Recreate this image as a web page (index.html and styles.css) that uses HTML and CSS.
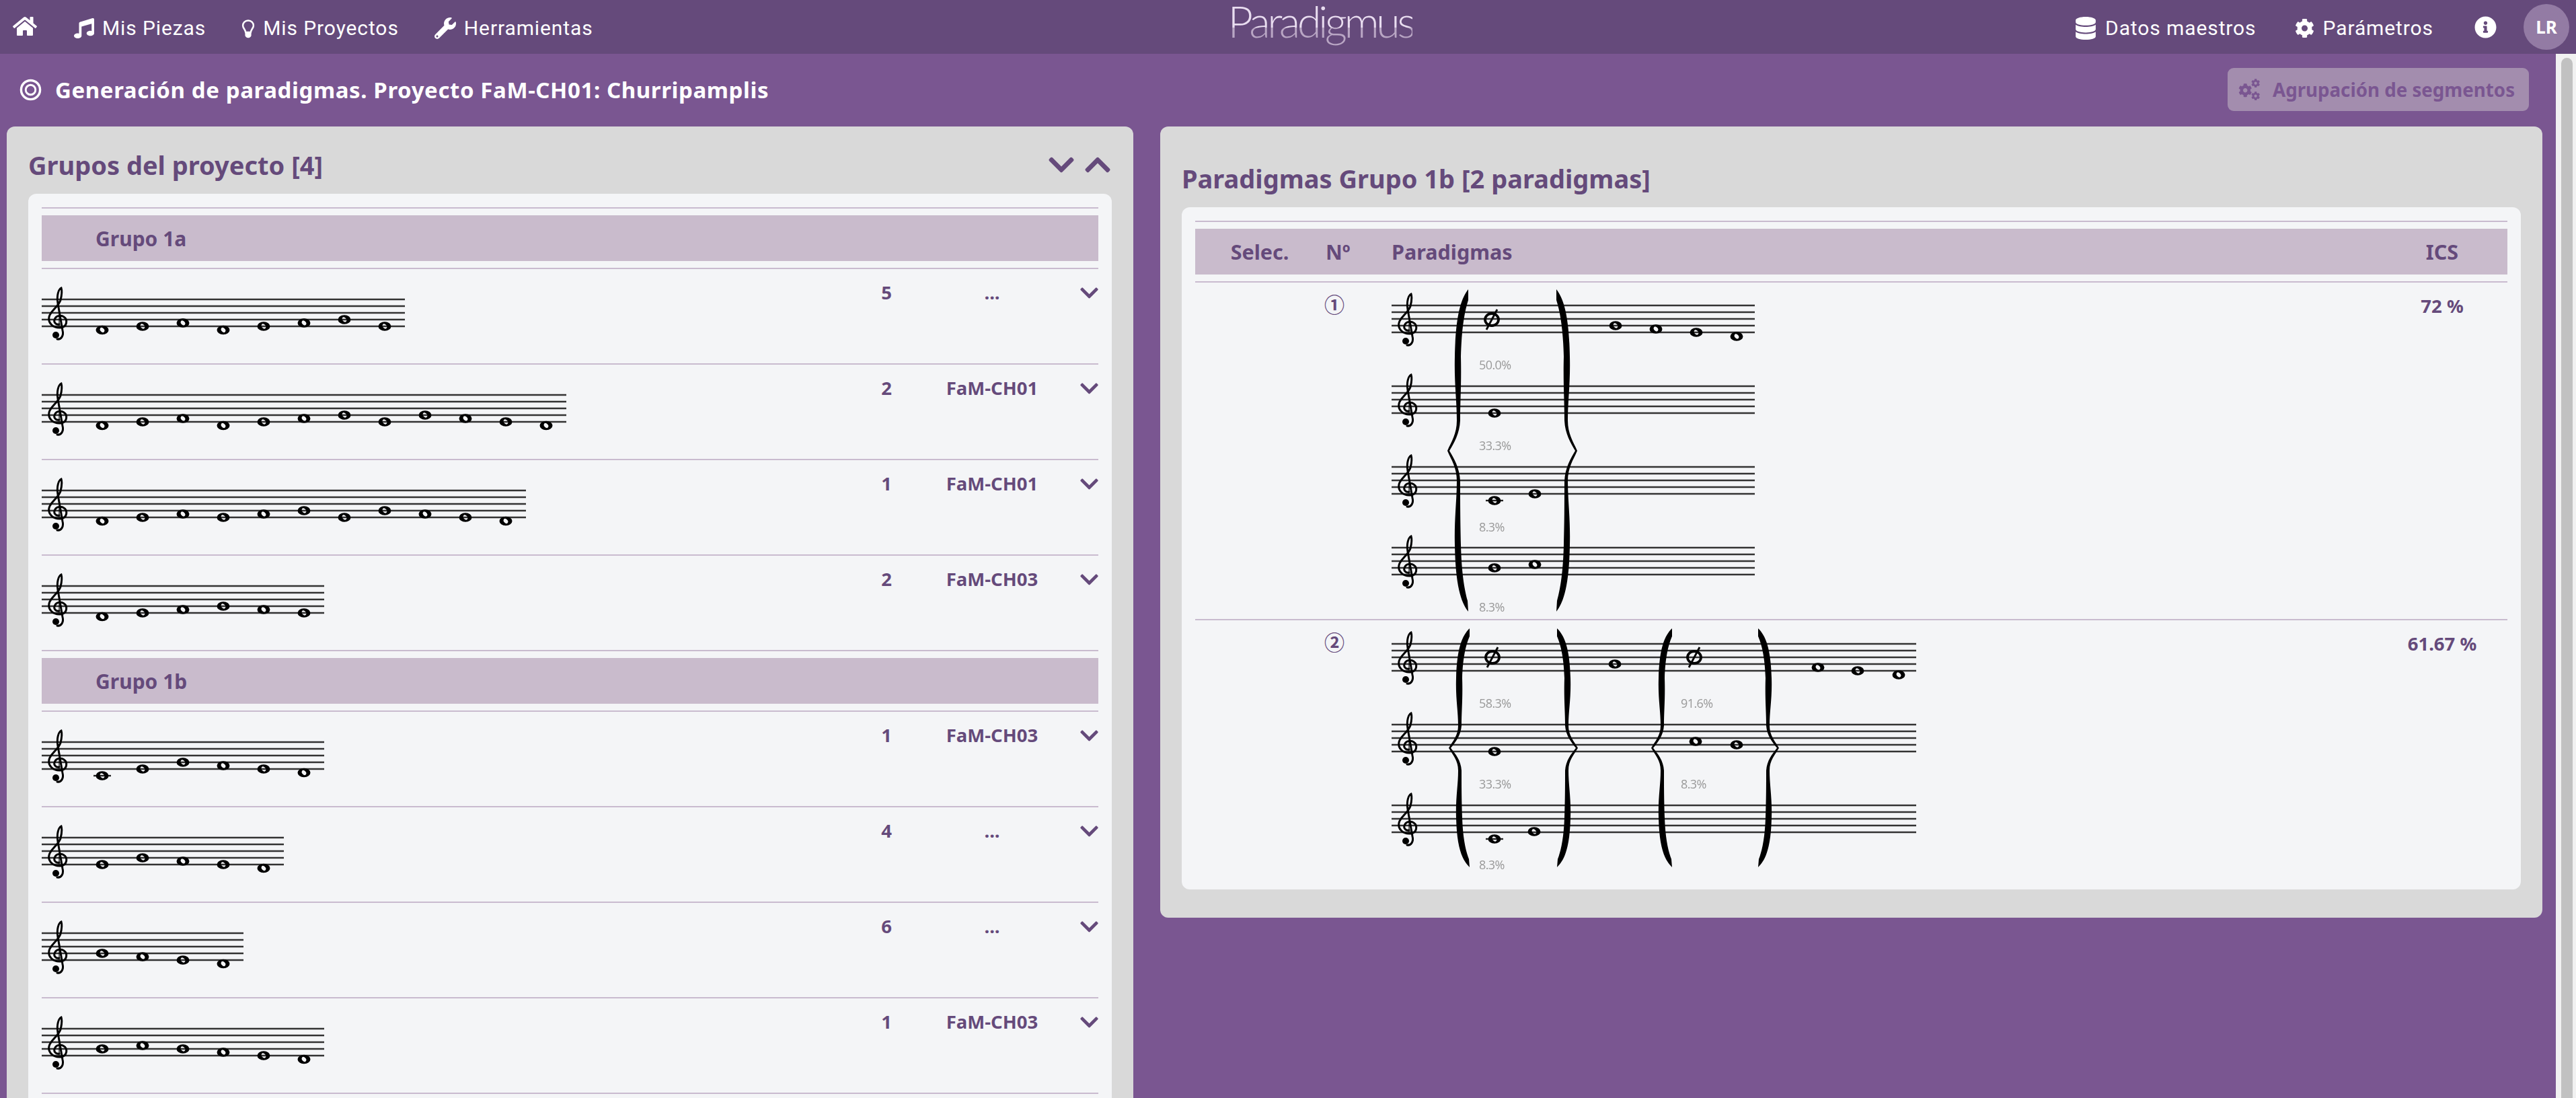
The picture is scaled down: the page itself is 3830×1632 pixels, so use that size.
FILE: index.html
```html
<!DOCTYPE html>
<html lang="es">
<head>
<meta charset="utf-8">
<title>Paradigmus</title>
<link rel="stylesheet" href="styles.css">
</head>
<body>
<svg class="defs" aria-hidden="true">
  <defs>
    <path id="i-home" d="M280.37 148.26L96 300.11V464a16 16 0 0 0 16 16l112.06-.29a16 16 0 0 0 15.92-16V368a16 16 0 0 1 16-16h64a16 16 0 0 1 16 16v95.64a16 16 0 0 0 16 16.05L464 480a16 16 0 0 0 16-16V300L295.67 148.26a12.19 12.19 0 0 0-15.3 0zM571.6 251.47L488 182.56V44.05a12 12 0 0 0-12-12h-56a12 12 0 0 0-12 12v72.61L318.47 43a48 48 0 0 0-61 0L4.34 251.47a12 12 0 0 0-1.6 16.9l25.5 31A12 12 0 0 0 45.15 301l235.22-193.74a12.19 12.19 0 0 1 15.3 0L530.9 301a12 12 0 0 0 16.9-1.6l25.5-31a12 12 0 0 0-1.7-16.93z"/>
    <path id="i-music" d="M470.38 1.51L150.41 96A32 32 0 0 0 128 126.51v261.41A139 139 0 0 0 96 384c-53 0-96 28.66-96 64s43 64 96 64 96-28.66 96-64V214.32l256-75v184.61a138.4 138.4 0 0 0-32-3.93c-53 0-96 28.66-96 64s43 64 96 64 96-28.65 96-64V32a32 32 0 0 0-41.62-30.49z"/>
    <path id="i-wrench" d="M507.73 109.1c-2.24-9.03-13.54-12.09-20.12-5.51l-74.36 74.36-67.88-11.31-11.31-67.88 74.36-74.36c6.62-6.62 3.43-17.9-5.66-20.16-47.38-11.74-99.55.91-136.58 37.93-39.64 39.64-50.55 97.1-34.05 147.2L18.74 402.76c-24.99 24.99-24.99 65.51 0 90.5 24.99 24.99 65.51 24.99 90.5 0l213.21-213.21c50.12 16.71 107.47 5.68 147.37-34.22 37.07-37.07 49.7-89.32 37.91-136.73zM64 472c-13.25 0-24-10.75-24-24 0-13.26 10.75-24 24-24s24 10.74 24 24c0 13.25-10.75 24-24 24z"/>
    <path id="i-db" d="M448 73.143v45.714C448 159.143 347.667 192 224 192S0 159.143 0 118.857V73.143C0 32.857 100.333 0 224 0s224 32.857 224 73.143zM448 176v102.857C448 319.143 347.667 352 224 352S0 319.143 0 278.857V176c48.125 33.143 136.208 48.572 224 48.572S399.874 209.143 448 176zm0 160v102.857C448 479.143 347.667 512 224 512S0 479.143 0 438.857V336c48.125 33.143 136.208 48.572 224 48.572S399.874 369.143 448 336z"/>
    <path id="i-cog" d="M487.4 315.7l-42.6-24.6c4.3-23.2 4.3-47 0-70.2l42.6-24.6c4.9-2.8 7.1-8.6 5.5-14-11.1-35.6-30-67.8-54.7-94.6-3.8-4.1-10-5.1-14.8-2.3L380.8 110c-17.9-15.4-38.5-27.3-60.8-35.1V25.8c0-5.6-3.9-10.5-9.4-11.7-36.7-8.2-74.3-7.8-109.2 0-5.5 1.2-9.4 6.1-9.4 11.7V75c-22.2 7.9-42.8 19.8-60.8 35.1L88.7 85.5c-4.9-2.8-11-1.9-14.8 2.3-24.7 26.7-43.6 58.9-54.7 94.6-1.7 5.4.6 11.2 5.5 14L67.3 221c-4.3 23.2-4.3 47 0 70.2l-42.6 24.6c-4.9 2.8-7.1 8.6-5.5 14 11.1 35.6 30 67.8 54.7 94.6 3.8 4.1 10 5.1 14.8 2.3l42.6-24.6c17.9 15.4 38.5 27.3 60.8 35.1v49.2c0 5.6 3.9 10.5 9.4 11.7 36.7 8.2 74.3 7.8 109.2 0 5.5-1.2 9.4-6.1 9.4-11.7v-49.2c22.2-7.9 42.8-19.8 60.8-35.1l42.6 24.6c4.9 2.8 11 1.9 14.8-2.3 24.7-26.7 43.6-58.9 54.7-94.6 1.5-5.5-.7-11.3-5.6-14.1zM256 336c-44.1 0-80-35.9-80-80s35.9-80 80-80 80 35.9 80 80-35.9 80-80 80z"/>
    <path id="i-info" d="M256 8C119 8 8 119.1 8 256c0 137 111 248 248 248s248-111 248-248C504 119.1 393 8 256 8zm0 110c23.2 0 42 18.8 42 42s-18.8 42-42 42-42-18.8-42-42 18.8-42 42-42zm56 254c0 6.6-5.4 12-12 12h-88c-6.6 0-12-5.4-12-12v-24c0-6.6 5.4-12 12-12h12v-64h-12c-6.6 0-12-5.4-12-12v-24c0-6.6 5.4-12 12-12h64c6.6 0 12 5.4 12 12v100h12c6.6 0 12 5.4 12 12v24z"/>
    <path id="i-chev" d="M207.029 381.476L12.686 187.132c-9.373-9.373-9.373-24.569 0-33.941l22.667-22.667c9.357-9.357 24.522-9.375 33.901-.04L224 284.505l154.745-154.021c9.379-9.335 24.544-9.317 33.901.04l22.667 22.667c9.373 9.373 9.373 24.569 0 33.941L240.971 381.476c-9.373 9.372-24.569 9.372-33.942 0z"/>

    <g id="clef">
      <path fill="none" stroke="#000" stroke-width="3" stroke-linecap="round" d="M26 37C20 38 17 33 20 28C22 24 29 23 33 26C39 30 38 41 28 42C17 43 9 35 11 26C13 17 25 11 28 1C30-7 30-14 29-17C25-15 22-6 24 6L31 46C33 54 29 60 23 59"/>
      <path fill="none" stroke="#000" stroke-width="1.2" d="M26 22V40"/>
      <circle cx="21" cy="53" r="5" fill="#000"/>
    </g>
    <path id="n" fill="#000" fill-rule="evenodd" d="M-9.500 0A9.500 6.800 0 1 1 9.500 0A9.500 6.800 0 1 1-9.500 0ZM-3-2.600A4 2.700 50 1 0 3 2.600A4 2.700 50 1 0-3-2.600Z"/>
    <g id="nl"><path d="M-13 0H13" stroke="#222" stroke-width="2.4"/><use href="#n"/></g>
    <g id="ns" fill="none" stroke="#000">
      <ellipse rx="10" ry="9" stroke-width="3.800"/>
      <path d="M-8 15L8-15" stroke-width="2.800"/>
    </g>
    <path id="brace" fill="#000" d="M31 0C20 14 12 40 11 100C10 140 14 165 14 195C14 215 6 226 0 240C6 254 14 265 14 285C14 315 10 340 11 380C12 440 20 465 31 479L30 463C25 445 21 420 20 380C19 340 19 315 19 285C18 265 10 252 3 240C10 228 18 215 19 195C19 165 21 140 20 100C21 60 25 35 31 16Z"/>
  </defs>
</svg>

<header class="navbar">
  <nav class="nav-group">
    <a class="nav-home"><svg class="ico ico-home" viewBox="0 0 576 512"><use href="#i-home"/></svg></a>
    <a class="nav-link"><svg class="ico ico-music" viewBox="0 0 512 512"><use href="#i-music"/></svg>Mis Piezas</a>
    <a class="nav-link"><svg class="ico ico-bulb" viewBox="0 0 24 34"><path fill="none" stroke="currentColor" stroke-width="3" d="M12 2.500C6 2.500 2.500 7 2.500 11.500C2.500 16 6.500 18 7.500 23.500H16.500C17.500 18 21.500 16 21.500 11.500C21.500 7 18 2.500 12 2.500Z"/><path fill="currentColor" d="M6.500 23H17.500V29C17.500 31 15 33.500 12 33.500C9 33.500 6.500 31 6.500 29Z"/></svg>Mis Proyectos</a>
    <a class="nav-link"><svg class="ico ico-wrench" viewBox="0 0 512 512"><use href="#i-wrench"/></svg>Herramientas</a>
  </nav>
  <div class="logo">Paradigmus</div>
  <nav class="nav-group nav-right">
    <a class="nav-link nav-db"><svg class="ico ico-db" viewBox="0 0 448 512"><use href="#i-db"/></svg>Datos maestros</a>
    <a class="nav-link nav-par"><svg class="ico ico-cog" viewBox="0 0 512 512"><use href="#i-cog"/></svg>Parámetros</a>
    <a class="nav-info"><svg class="ico ico-info" viewBox="0 0 512 512"><use href="#i-info"/></svg></a>
    <span class="avatar">LR</span>
  </nav>
</header>

<section class="subheader">
  <h1 class="page-title">
    <svg class="ico ico-target" viewBox="0 0 34 34"><circle cx="17" cy="17" r="14.500" fill="none" stroke="currentColor" stroke-width="3.500"/><circle cx="17" cy="17" r="7.500" fill="none" stroke="currentColor" stroke-width="3"/></svg>
    Generación de paradigmas. Proyecto FaM-CH01: Churripamplis
  </h1>
  <button class="btn-disabled" type="button">
    <svg class="ico ico-gears" viewBox="0 0 32 32"><use href="#i-cog" transform="translate(0 7) scale(.04)"/><use href="#i-cog" transform="translate(19 0) scale(.026)"/><use href="#i-cog" transform="translate(19 19) scale(.026)"/></svg>
    Agrupación de segmentos
  </button>
</section>

<main class="columns">
  <section class="card">
    <div class="card-head card-head-left">
      <h2 class="card-title">Grupos del proyecto [4]</h2>
      <div class="card-tools">
        <svg class="ico ico-tool" viewBox="0 0 448 512"><use href="#i-chev"/></svg>
        <svg class="ico ico-tool flip" viewBox="0 0 448 512"><use href="#i-chev"/></svg>
      </div>
    </div>
    <div class="panel">
      <div class="group-row"><div class="group-bar">Grupo 1a</div></div>

      <div class="item">
        <svg class="score" width="540" height="100" viewBox="0 -25 540 100"><path class="staff" d="M0 0H540M0 10H540M0 20H540M0 30H540M0 40H540"/><use href="#clef"/><use href="#n" x="90" y="45.500"/><use href="#n" x="150" y="40"/><use href="#n" x="210" y="35"/><use href="#n" x="270" y="45.500"/><use href="#n" x="330" y="40"/><use href="#n" x="390" y="35"/><use href="#n" x="450" y="30"/><use href="#n" x="510" y="40"/></svg>
        <span class="cell">5</span><span class="cell">...</span>
        <span class="cell-chev"><svg class="ico ico-chev" viewBox="0 0 448 512"><use href="#i-chev"/></svg></span>
      </div>
      <div class="item">
        <svg class="score" width="780" height="100" viewBox="0 -25 780 100"><path class="staff" d="M0 0H780M0 10H780M0 20H780M0 30H780M0 40H780"/><use href="#clef"/><use href="#n" x="90" y="45.500"/><use href="#n" x="150" y="40"/><use href="#n" x="210" y="35"/><use href="#n" x="270" y="45.500"/><use href="#n" x="330" y="40"/><use href="#n" x="390" y="35"/><use href="#n" x="450" y="30"/><use href="#n" x="510" y="40"/><use href="#n" x="570" y="30"/><use href="#n" x="630" y="35"/><use href="#n" x="690" y="40"/><use href="#n" x="750" y="45.500"/></svg>
        <span class="cell">2</span><span class="cell">FaM-CH01</span>
        <span class="cell-chev"><svg class="ico ico-chev" viewBox="0 0 448 512"><use href="#i-chev"/></svg></span>
      </div>
      <div class="item">
        <svg class="score" width="720" height="100" viewBox="0 -25 720 100"><path class="staff" d="M0 0H720M0 10H720M0 20H720M0 30H720M0 40H720"/><use href="#clef"/><use href="#n" x="90" y="45.500"/><use href="#n" x="150" y="40"/><use href="#n" x="210" y="35"/><use href="#n" x="270" y="40"/><use href="#n" x="330" y="35"/><use href="#n" x="390" y="30"/><use href="#n" x="450" y="40"/><use href="#n" x="510" y="30"/><use href="#n" x="570" y="35"/><use href="#n" x="630" y="40"/><use href="#n" x="690" y="45.500"/></svg>
        <span class="cell">1</span><span class="cell">FaM-CH01</span>
        <span class="cell-chev"><svg class="ico ico-chev" viewBox="0 0 448 512"><use href="#i-chev"/></svg></span>
      </div>
      <div class="item">
        <svg class="score" width="420" height="100" viewBox="0 -25 420 100"><path class="staff" d="M0 0H420M0 10H420M0 20H420M0 30H420M0 40H420"/><use href="#clef"/><use href="#n" x="90" y="45.500"/><use href="#n" x="150" y="40"/><use href="#n" x="210" y="35"/><use href="#n" x="270" y="30"/><use href="#n" x="330" y="35"/><use href="#n" x="390" y="40"/></svg>
        <span class="cell">2</span><span class="cell">FaM-CH03</span>
        <span class="cell-chev"><svg class="ico ico-chev" viewBox="0 0 448 512"><use href="#i-chev"/></svg></span>
      </div>

      <div class="group-row"><div class="group-bar">Grupo 1b</div></div>

      <div class="item">
        <svg class="score" width="420" height="100" viewBox="0 -25 420 100"><path class="staff" d="M0 0H420M0 10H420M0 20H420M0 30H420M0 40H420"/><use href="#clef"/><use href="#nl" x="90" y="50"/><use href="#n" x="150" y="40"/><use href="#n" x="210" y="30"/><use href="#n" x="270" y="35"/><use href="#n" x="330" y="40"/><use href="#n" x="390" y="45.500"/></svg>
        <span class="cell">1</span><span class="cell">FaM-CH03</span>
        <span class="cell-chev"><svg class="ico ico-chev" viewBox="0 0 448 512"><use href="#i-chev"/></svg></span>
      </div>
      <div class="item">
        <svg class="score" width="360" height="100" viewBox="0 -25 360 100"><path class="staff" d="M0 0H360M0 10H360M0 20H360M0 30H360M0 40H360"/><use href="#clef"/><use href="#n" x="90" y="40"/><use href="#n" x="150" y="30"/><use href="#n" x="210" y="35"/><use href="#n" x="270" y="40"/><use href="#n" x="330" y="45.500"/></svg>
        <span class="cell">4</span><span class="cell">...</span>
        <span class="cell-chev"><svg class="ico ico-chev" viewBox="0 0 448 512"><use href="#i-chev"/></svg></span>
      </div>
      <div class="item">
        <svg class="score" width="300" height="100" viewBox="0 -25 300 100"><path class="staff" d="M0 0H300M0 10H300M0 20H300M0 30H300M0 40H300"/><use href="#clef"/><use href="#n" x="90" y="30"/><use href="#n" x="150" y="35"/><use href="#n" x="210" y="40"/><use href="#n" x="270" y="45.500"/></svg>
        <span class="cell">6</span><span class="cell">...</span>
        <span class="cell-chev"><svg class="ico ico-chev" viewBox="0 0 448 512"><use href="#i-chev"/></svg></span>
      </div>
      <div class="item">
        <svg class="score" width="420" height="100" viewBox="0 -25 420 100"><path class="staff" d="M0 0H420M0 10H420M0 20H420M0 30H420M0 40H420"/><use href="#clef"/><use href="#n" x="90" y="30"/><use href="#n" x="150" y="25"/><use href="#n" x="210" y="30"/><use href="#n" x="270" y="35"/><use href="#n" x="330" y="40"/><use href="#n" x="390" y="45.500"/></svg>
        <span class="cell">1</span><span class="cell">FaM-CH03</span>
        <span class="cell-chev"><svg class="ico ico-chev" viewBox="0 0 448 512"><use href="#i-chev"/></svg></span>
      </div>
      <div class="item item-end"></div>
    </div>
  </section>

  <section class="card card-right">
    <div class="card-head card-head-right">
      <h2 class="card-title">Paradigmas Grupo 1b [2 paradigmas]</h2>
    </div>
    <div class="panel">
      <div class="group-row">
        <div class="thead">
          <span class="th-sel">Selec.</span><span class="th-num">Nº</span><span>Paradigmas</span><span class="th-ics">ICS</span>
        </div>
      </div>

      <div class="prow prow-first">
        <span></span>
        <span class="num">①</span>
        <svg class="score" width="620" height="484" viewBox="0 -24 620 484">
          <path class="staff" d="M0 0H540M0 10H540M0 20H540M0 30H540M0 40H540M0 120H540M0 130H540M0 140H540M0 150H540M0 160H540M0 240H540M0 250H540M0 260H540M0 270H540M0 280H540M0 360H540M0 370H540M0 380H540M0 390H540M0 400H540"/>
          <use href="#clef"/><use href="#clef" y="120"/><use href="#clef" y="240"/><use href="#clef" y="360"/>
          <use href="#brace" transform="translate(83 -24)"/><use href="#brace" transform="translate(276 -24) scale(-1 1)"/>
          <use href="#ns" x="149" y="21"/><use href="#n" x="333" y="30"/><use href="#n" x="393" y="35"/><use href="#n" x="453" y="40"/><use href="#n" x="513" y="46"/>
          <use href="#n" x="153" y="160"/>
          <use href="#nl" x="153" y="290"/><use href="#n" x="213" y="280"/>
          <use href="#n" x="153" y="390"/><use href="#n" x="213" y="385"/>
          <text class="pct" x="130" y="95">50.0%</text><text class="pct" x="130" y="215">33.3%</text><text class="pct" x="130" y="336">8.3%</text><text class="pct" x="130" y="455">8.3%</text>
        </svg>
        <span class="ics">72 %</span>
      </div>

      <div class="prow prow-second">
        <span></span>
        <span class="num">②</span>
        <svg class="score" width="800" height="370" viewBox="0 -25 800 370">
          <path class="staff" d="M0 0H780M0 10H780M0 20H780M0 30H780M0 40H780M0 120H780M0 130H780M0 140H780M0 150H780M0 160H780M0 240H780M0 250H780M0 260H780M0 270H780M0 280H780"/>
          <use href="#clef"/><use href="#clef" y="120"/><use href="#clef" y="240"/>
          <use href="#brace" transform="translate(85 -23) scale(1 .741)"/><use href="#brace" transform="translate(277 -23) scale(-1 .741)"/>
          <use href="#brace" transform="translate(386 -23) scale(1 .741)"/><use href="#brace" transform="translate(576 -23) scale(-1 .741)"/>
          <use href="#ns" x="150" y="20"/><use href="#n" x="332" y="30"/><use href="#ns" x="450" y="20"/><use href="#n" x="634" y="35"/><use href="#n" x="693" y="40"/><use href="#n" x="754" y="46"/>
          <use href="#n" x="153" y="160"/><use href="#n" x="452" y="145"/><use href="#n" x="513" y="150"/>
          <use href="#nl" x="153" y="290"/><use href="#n" x="212" y="279"/>
          <text class="pct" x="130" y="95">58.3%</text><text class="pct" x="130" y="215">33.3%</text><text class="pct" x="130" y="335">8.3%</text>
          <text class="pct" x="430" y="95">91.6%</text><text class="pct" x="430" y="215">8.3%</text>
        </svg>
        <span class="ics">61.67 %</span>
      </div>
    </div>
  </section>
</main>

<div class="scrollbar"><div class="scrollbar-thumb"></div></div>
</body>
</html>
```

FILE: styles.css
```css
* { box-sizing: border-box; }
html, body { margin: 0; height: 1632px; overflow: hidden; }
body {
  position: relative;
  background: #7a5691;
  font-family: "Noto Sans", Roboto, sans-serif;
  color: #654a7b;
}
.defs { display: none; }
.ico { display: block; fill: currentColor; flex: none; }

/* navbar */
.navbar {
  display: flex;
  justify-content: space-between;
  align-items: center;
  height: 80px;
  padding: 0 10px 0 19px;
  background: #654a7b;
  color: #fff;
}
.nav-group { display: flex; align-items: center; gap: 53px; }
.nav-link {
  display: flex;
  align-items: center;
  gap: 12px;
  font-family: Roboto, sans-serif;
  font-size: 30px;
  letter-spacing: .9px;
  line-height: 40px;
  padding-top: 4px;
}
.ico-home { width: 36px; height: 32px; }
.ico-music { width: 30px; height: 30px; }
.ico-bulb { width: 20px; height: 29px; }
.ico-wrench { width: 32px; height: 32px; }
.ico-db { width: 30px; height: 34px; }
.ico-cog { width: 29px; height: 30px; }
.ico-info { width: 33px; height: 33px; }
.nav-home { margin: -3px 2px 0 0; }
.logo {
  align-self: flex-start;
  margin-right: 42px;
  padding-bottom: 16px;
  font-family: Lato, sans-serif;
  font-weight: 300;
  font-size: 65px;
  line-height: 62px;
  letter-spacing: -4.600px;
  color: transparent;
  background: linear-gradient(#e9ddf0 0, #e9ddf0 41px, #b9a6c4 41px, #b9a6c4 80px);
  -webkit-background-clip: text;
  background-clip: text;
}
.nav-right { gap: 0; }
.nav-db { gap: 14px; }
.nav-par { margin-left: 57px; gap: 13px; }
.nav-info { margin-left: 61px; }
.avatar {
  display: flex;
  align-items: center;
  justify-content: center;
  width: 68px;
  height: 68px;
  margin-left: 40px;
  border-radius: 50%;
  background: #937ba4;
  font-size: 26px;
  font-weight: 700;
}

/* sub header */
.subheader {
  display: flex;
  justify-content: space-between;
  align-items: center;
  height: 108px;
  padding: 0 70px 2px 29px;
  color: #fff;
}
.page-title {
  display: flex;
  align-items: center;
  gap: 20px;
  margin: 0;
  font-size: 33px;
  letter-spacing: .6px;
  font-weight: 700;
}
.ico-target { width: 33px; height: 33px; }
.btn-disabled {
  display: flex;
  align-items: center;
  gap: 19px;
  height: 64px;
  width: 448px;
  padding: 0 0 0 16px;
  border: 0;
  border-radius: 9px;
  background: #a38dae;
  color: #7a5691;
  font: 700 27.700px "Noto Sans", sans-serif;
}
.ico-gears { width: 32px; height: 32px; }

/* columns */
.columns {
  display: grid;
  grid-template-columns: 1675fr 2055fr;
  gap: 40px;
  align-items: start;
  padding: 0 50px 0 10px;
}
.card {
  background: #d9d9d9;
  border-radius: 12px;
  padding: 0 32px 42px;
}
.card-head { display: flex; justify-content: space-between; align-items: center; }
.card-head-left { height: 100px; padding-top: 14px; }
.card-head-right { height: 120px; padding-top: 34px; }
.card-title { margin: 0; font-size: 38px; font-weight: 700; color: #654a7b; }
.card-tools { display: flex; gap: 16px; margin-right: 2px; }
.ico-tool { width: 38px; height: 44px; }
.flip { transform: rotate(180deg); }

.panel {
  background: #f4f5f7;
  border-radius: 12px;
  padding: 20px;
}

/* list of groups */
.group-row { border-top: 2px solid #c9bbcf; padding: 10px 0; }
.group-bar {
  display: flex;
  align-items: center;
  height: 68px;
  padding-left: 80px;
  background: #c9bbcc;
  font-size: 30px;
  font-weight: 700;
}
.item {
  display: grid;
  grid-template-columns: 1fr 86px 228px 44px;
  align-items: start;
  height: 142px;
  padding-top: 20px;
  border-top: 2px solid #c9bbcf;
}
.item-end { height: 40px; }
.cell {
  text-align: center;
  font-size: 27.500px;
  font-weight: 700;
  line-height: 30px;
}
.cell-chev { display: flex; justify-content: flex-end; height: 30px; align-items: center; }
.ico-chev { width: 27px; height: 31px; }

.score { display: block; overflow: visible; filter: blur(.4px); }
.staff { stroke: #333; stroke-width: 2.400; fill: none; }
.pct { font-family: "Open Sans", sans-serif; font-size: 18px; letter-spacing: -.6px; fill: #999; }

/* paradigm table */
.thead {
  display: grid;
  grid-template-columns: 192px 100px 1fr 194px;
  align-items: center;
  height: 68px;
  background: #c9bbcc;
  font-size: 30.500px;
  font-weight: 700;
}
.th-sel, .th-ics { text-align: center; }
.th-num { padding-left: 2px; }
.prow {
  display: grid;
  grid-template-columns: 192px 100px 1fr 194px;
  align-items: start;
  border-top: 2px solid #c9bbcf;
}
.prow-first { height: 502px; padding-top: 10px; }
.prow-second { height: 382px; padding-top: 10px; }
.num { font-family: "Noto Sans CJK JP", sans-serif; font-size: 30px; line-height: 30px; font-weight: 700; margin-top: 6px; }
.ics { text-align: center; font-size: 27.500px; font-weight: 700; line-height: 30px; margin-top: 10px; }

/* page scrollbar drawn over the page */
.scrollbar {
  position: absolute;
  top: 80px;
  right: 0;
  bottom: 0;
  width: 30px;
  padding: 6px 5px 0 8px;
  background: #f1f1f1;
}
.scrollbar-thumb { height: 100%; border-radius: 9px 9px 0 0; background: #c1c1c1; }
```
